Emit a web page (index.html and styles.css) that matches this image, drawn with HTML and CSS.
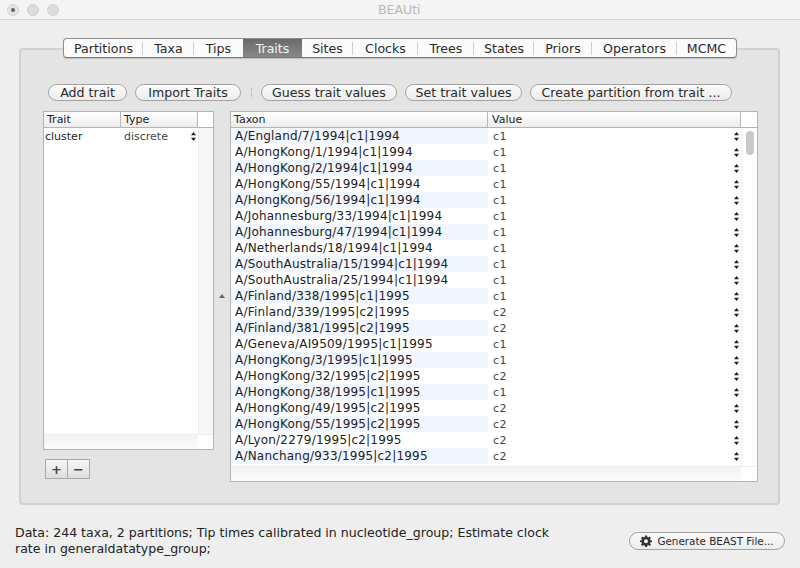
FILE: index.html
```html
<!DOCTYPE html>
<html lang="en">
<head>
  <meta charset="UTF-8">
  <title>BEAUti</title>
  <link rel="stylesheet" href="styles.css">
</head>
<body>
  <header class="titlebar">
    <div class="lights">
      <span class="light light-on"></span>
      <span class="light"></span>
      <span class="light"></span>
    </div>
    <div class="title">BEAUti</div>
  </header>

  <main class="panel">
    <nav class="tabs">
      <span class="tab tab-partitions">Partitions</span>
      <span class="tab tab-taxa">Taxa</span>
      <span class="tab tab-tips">Tips</span>
      <span class="tab tab-traits active">Traits</span>
      <span class="tab tab-sites">Sites</span>
      <span class="tab tab-clocks">Clocks</span>
      <span class="tab tab-trees">Trees</span>
      <span class="tab tab-states">States</span>
      <span class="tab tab-priors">Priors</span>
      <span class="tab tab-operators">Operators</span>
      <span class="tab tab-mcmc">MCMC</span>
    </nav>

    <div class="toolbar">
      <button class="pill btn-add">Add trait</button>
      <button class="pill btn-import">Import Traits</button>
      <span class="sep"></span>
      <button class="pill btn-guess">Guess trait values</button>
      <button class="pill btn-set">Set trait values</button>
      <button class="pill btn-create">Create partition from trait ...</button>
    </div>

    <div class="split">
      <div class="left">
        <div class="table table-traits">
          <div class="thead">
            <span class="th col-trait">Trait</span>
            <span class="th col-type">Type</span>
            <span class="th-end"></span>
          </div>
          <div class="tbody">
            <div class="rows">
              <div class="row">
                <span class="cell col-trait">cluster</span>
                <span class="cell col-type">discrete<svg class="updown" viewBox="0 0 6 11"><path d="M3 0L6 4H0zM3 11L0 7H6z"/></svg></span>
              </div>
            </div>
            <div class="vbar"></div>
          </div>
          <div class="hbar"><span class="hbar-track"></span><span class="hbar-end"></span></div>
        </div>
        <div class="addremove">
          <button class="square">+</button>
          <button class="square">&minus;</button>
        </div>
      </div>

      <div class="divider"><span class="grip"></span></div>

      <div class="table table-taxa">
        <div class="thead">
          <span class="th col-taxon">Taxon</span>
          <span class="th col-value">Value</span>
          <span class="th-end"></span>
        </div>
        <div class="tbody">
          <div class="rows" id="rows"></div>
          <div class="vbar"><span class="thumb"></span></div>
        </div>
        <div class="hbar"><span class="hbar-track"></span><span class="hbar-end"></span></div>
      </div>
    </div>
  </main>

  <footer class="status">
    <p class="status-text">Data: 244 taxa, 2 partitions; Tip times calibrated in nucleotide_group; Estimate clock rate in generaldatatype_group;</p>
    <button class="pill btn-generate">
      <svg class="gear" viewBox="0 0 24 24"><path d="M10 1h4l.6 3.2 1.9.8 2.7-1.9 2.8 2.8-1.9 2.7.8 1.9L24 11v3l-3.1.6-.8 1.9 1.9 2.7-2.8 2.8-2.7-1.9-1.9.8L14 24h-4l-.6-3.1-1.9-.8-2.7 1.9-2.8-2.8 1.9-2.7-.8-1.9L0 14v-3l3.1-.5.8-1.9L2 5.9l2.8-2.8 2.7 1.9 1.9-.8zM12 8.5a4 4 0 1 0 0 8a4 4 0 1 0 0-8z" fill-rule="evenodd"/></svg>
      Generate BEAST File...
    </button>
  </footer>

  <script>
    const taxa = [
      ["A/England/7/1994|c1|1994", "c1"],
      ["A/HongKong/1/1994|c1|1994", "c1"],
      ["A/HongKong/2/1994|c1|1994", "c1"],
      ["A/HongKong/55/1994|c1|1994", "c1"],
      ["A/HongKong/56/1994|c1|1994", "c1"],
      ["A/Johannesburg/33/1994|c1|1994", "c1"],
      ["A/Johannesburg/47/1994|c1|1994", "c1"],
      ["A/Netherlands/18/1994|c1|1994", "c1"],
      ["A/SouthAustralia/15/1994|c1|1994", "c1"],
      ["A/SouthAustralia/25/1994|c1|1994", "c1"],
      ["A/Finland/338/1995|c1|1995", "c1"],
      ["A/Finland/339/1995|c2|1995", "c2"],
      ["A/Finland/381/1995|c2|1995", "c2"],
      ["A/Geneva/AI9509/1995|c1|1995", "c1"],
      ["A/HongKong/3/1995|c1|1995", "c1"],
      ["A/HongKong/32/1995|c2|1995", "c2"],
      ["A/HongKong/38/1995|c1|1995", "c1"],
      ["A/HongKong/49/1995|c2|1995", "c2"],
      ["A/HongKong/55/1995|c2|1995", "c2"],
      ["A/Lyon/2279/1995|c2|1995", "c2"],
      ["A/Nanchang/933/1995|c2|1995", "c2"]
    ];

    const rows = document.getElementById("rows");
    taxa.forEach(function (taxon) {
      const row = document.createElement("div");
      row.className = "row";
      row.innerHTML = `<span class="cell col-taxon">${taxon[0]}</span>` +
        `<span class="cell col-value">${taxon[1]}<svg class="updown" viewBox="0 0 6 11"><path d="M3 0L6 4H0zM3 11L0 7H6z"/></svg></span>`;
      rows.appendChild(row);
    });
  </script>
</body>
</html>
```

FILE: styles.css
```css
* {
  box-sizing: border-box;
}

body {
  margin: 0;
  width: 800px;
  height: 568px;
  overflow: hidden;
  background-color: #eeeeee;
  font-family: "DejaVu Sans", sans-serif;
  font-size: 12px;
  color: #222;
}

.titlebar {
  display: flex;
  align-items: center;
  height: 20px;
  padding-left: 7px;
  background-color: #f4f4f4;
  border-bottom: 1px solid #d4d4d4;
}

.lights {
  display: flex;
  gap: 8px;
  width: 371px;
}

.light {
  width: 12px;
  height: 12px;
  border-radius: 50%;
  background-color: #dcdcdc;
  border: 1px solid #d0d0d0;
}

.light-on {
  background: radial-gradient(circle, #666 0, #666 1.5px, #e4e4e4 2.5px);
}

.title {
  color: #b8b8b8;
  font-size: 12.5px;
}

.panel {
  width: 761px;
  height: 457px;
  margin: 28px 0 0 19px;
  padding: 0 0 0 22px;
  background-color: #e4e4e4;
  border: 2px solid #d0d0d0;
  border-radius: 4px;
}

.tabs {
  display: flex;
  width: 674px;
  height: 20px;
  margin: -12px 0 0 20px;
  background-color: #fbfbfb;
  border: 1px solid #8e8e8e;
  border-bottom-color: #777;
  border-radius: 4px;
  box-shadow: 0 1px 1px rgba(0, 0, 0, 0.15);
}

.tab {
  display: flex;
  align-items: center;
  justify-content: center;
  height: 18px;
  background: linear-gradient(#cfcfcf, #cfcfcf) no-repeat right center / 1px 13px;
  font-size: 12.6px;
  color: #2a2a2a;
  white-space: nowrap;
}

.tab-partitions { width: 79px; }
.tab-taxa { width: 51px; }
.tab-tips { width: 49px; background: none; }
.tab-traits { width: 59px; }
.tab-sites { width: 51px; }
.tab-clocks { width: 65px; }
.tab-trees { width: 56px; }
.tab-states { width: 60px; }
.tab-priors { width: 58px; }
.tab-operators { width: 85px; }
.tab-mcmc { width: 59px; background: none; }

.tab.active {
  background: linear-gradient(#6a6a6a, #888888);
  color: #f4f4f4;
}

.toolbar {
  display: flex;
  align-items: center;
  height: 17px;
  margin: 26px 0 0 5px;
}

.pill {
  display: flex;
  align-items: center;
  justify-content: center;
  height: 17px;
  padding: 0;
  background: linear-gradient(#fafafa, #ececec);
  border: 1px solid #a2a2a2;
  border-radius: 9px;
  font-family: inherit;
  font-size: 12.6px;
  color: #2a2a2a;
  white-space: nowrap;
}

.btn-add { width: 79px; }
.btn-import { width: 106px; margin-left: 8px; }
.sep {
  width: 0;
  height: 10px;
  margin: 0 9px 0 10px;
  border-left: 1px dotted #aaa;
}
.btn-guess { width: 136px; }
.btn-set { width: 117px; margin-left: 8px; }
.btn-create { width: 202px; margin-left: 8px; }

.split {
  display: flex;
  margin-top: 10px;
}

.left {
  width: 171px;
}

.table {
  display: flex;
  flex-direction: column;
  background-color: #fff;
  border: 1px solid #b4b4b4;
}

.table-traits { height: 339px; }
.table-taxa { width: 528px; height: 371px; }

.thead {
  display: flex;
  height: 16px;
  border-bottom: 1px solid #b4b4b4;
}

.th {
  display: flex;
  align-items: center;
  padding-left: 3px;
  height: 15px;
  background: linear-gradient(#ffffff, #ececec);
  border-right: 1px solid #b8b8b8;
  font-size: 11px;
}

.th-end {
  flex: 1;
}

.col-trait { width: 77px; }
.col-type { width: 77px; }
.col-taxon { width: 257px; }
.col-value { width: 253px; }

.tbody {
  display: flex;
  flex: 1;
  min-height: 0;
}

.rows {
  overflow: hidden;
}

.row {
  display: flex;
  height: 16px;
}

.cell {
  display: flex;
  align-items: center;
  padding-left: 1px;
  height: 16px;
  font-size: 11px;
  white-space: nowrap;
}

.cell.col-taxon {
  padding-left: 4px;
  font-size: 12px;
  letter-spacing: 0.2px;
}

.row:nth-child(odd) .cell.col-taxon {
  background-color: #f1f5fd;
}

.cell.col-type,
.cell.col-value {
  justify-content: space-between;
  padding-left: 3px;
  padding-right: 2px;
  color: #444;
}

.cell.col-value {
  padding-left: 5px;
  letter-spacing: 0.4px;
}

.th.col-value {
  padding-left: 4px;
}

.updown {
  width: 5px;
  height: 11px;
  fill: #222;
}

.vbar {
  flex: 1;
  padding: 3px;
  background-color: #fff;
  border-left: 1px solid #ececec;
}

.thumb {
  display: block;
  width: 8px;
  height: 24px;
  margin-left: 1px;
  background-color: #c8c8c8;
  border-radius: 4px;
}

.table-traits .vbar {
  background-color: #f6f6f6;
}

.hbar {
  display: flex;
  height: 15px;
  border-top: 1px solid #ececec;
}

.hbar-track {
  background: linear-gradient(#f2f2f2, #fbfbfb);
}

.table-traits .hbar-track { width: 154px; }
.table-taxa .hbar-track { width: 510px; }

.addremove {
  display: flex;
  margin: 9px 0 0 2px;
}

.square {
  width: 23px;
  height: 20px;
  padding: 0;
  background: linear-gradient(#f6f6f6, #dedede);
  border: 1px solid #a8a8a8;
  font-family: inherit;
  font-size: 13px;
  font-weight: bold;
  line-height: 15px;
  color: #444;
}

.square + .square {
  margin-left: -1px;
}

.divider {
  display: flex;
  align-items: center;
  justify-content: center;
  width: 16px;
  height: 371px;
}

.grip {
  width: 6px;
  height: 4px;
  margin-bottom: 1px;
  background-color: #666;
  clip-path: polygon(50% 0, 100% 100%, 0 100%);
}

.status {
  display: flex;
  justify-content: space-between;
  align-items: flex-start;
  padding: 0 15px;
  margin-top: 20px;
}

.status-text {
  width: 560px;
  margin: 0;
  font-size: 12.55px;
  line-height: 16px;
}

.btn-generate {
  gap: 5px;
  width: 156px;
  height: 18px;
  margin-top: 7px;
  font-size: 10.4px;
}

.gear {
  width: 12px;
  height: 12px;
  fill: #333;
}
```
